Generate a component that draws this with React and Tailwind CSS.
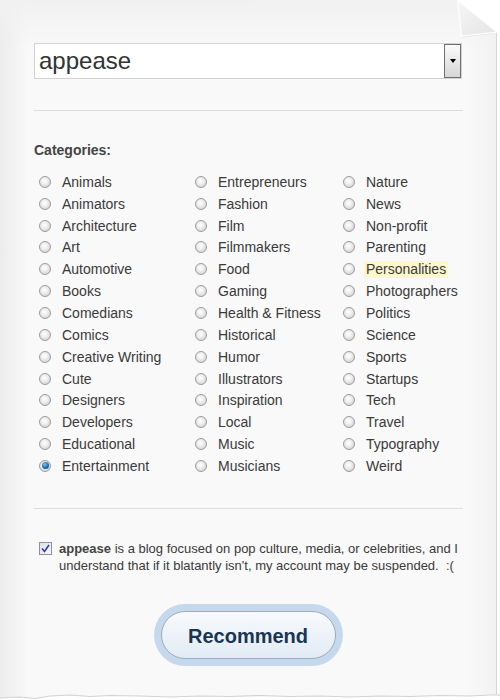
import React from "react";

const col1 = ["Animals","Animators","Architecture","Art","Automotive","Books","Comedians","Comics","Creative Writing","Cute","Designers","Developers","Educational","Entertainment"];
const col2 = ["Entrepreneurs","Fashion","Film","Filmmakers","Food","Gaming","Health & Fitness","Historical","Humor","Illustrators","Inspiration","Local","Music","Musicians"];
const col3 = ["Nature","News","Non-profit","Parenting","Personalities","Photographers","Politics","Science","Sports","Startups","Tech","Travel","Typography","Weird"];

function Radio({ checked }) {
  return (
    <span className="ml-[5px] mr-[11px] w-[12px] h-[12px] rounded-full border border-[#9c9c9c] bg-[radial-gradient(circle_at_45%_40%,#ffffff_0%,#f0f0f0_35%,#c9c9c9_100%)] flex items-center justify-center shrink-0">
      {checked && (
        <span className="w-[7px] h-[7px] rounded-full bg-[radial-gradient(circle_at_40%_35%,#7fc3f0_0%,#1a6db3_55%,#0b3f73_100%)]" />
      )}
    </span>
  );
}

function Cell({ label }) {
  const checked = label === "Entertainment";
  const hl = label === "Personalities";
  return (
    <div className="flex items-center h-[21.85px]">
      <Radio checked={checked} />
      <span className={hl ? "bg-[#fdf7cf] px-[2px] -ml-[2px] leading-[17px]" : ""}>{label}</span>
    </div>
  );
}

export default function App() {
  const rows = [];
  for (let i = 0; i < 14; i++) {
    rows.push(<Cell key={"a" + i} label={col1[i]} />);
    rows.push(<Cell key={"b" + i} label={col2[i]} />);
    rows.push(<Cell key={"c" + i} label={col3[i]} />);
  }
  return (
    <div className="relative w-[500px] h-[700px] overflow-hidden bg-white font-['Liberation_Sans',Arial,sans-serif] text-[#3a3a3a]">
      <div className="relative w-[497px] h-[700px] bg-[#f9f9f9] border-r border-[#d6d6d6]">
        <div className="absolute left-0 top-0 w-[28px] h-full bg-gradient-to-r from-[#ececec] to-transparent" />
        <div className="absolute left-0 top-0 w-full h-[50px] bg-gradient-to-b from-[#f1f1f1] to-transparent" />
        <div className="absolute right-0 top-0 w-[30px] h-full bg-gradient-to-l from-[#f2f2f2] to-transparent" />

        <div className="relative pt-[43px] px-[34px]">
          <div className="h-[36px] w-[428px] border border-[#d2d2d2] bg-white flex items-center justify-between">
            <span className="pl-[4px] text-[24px] leading-[28px] text-[#333]">appease</span>
            <div className="w-[17px] h-[34px] border border-[#6f6f6f] bg-gradient-to-b from-[#fbfbfb] to-[#d6d6d6] flex items-start justify-center pt-[14px]">
              <span className="w-0 h-0 border-l-[3px] border-r-[3px] border-t-[4px] border-l-transparent border-r-transparent border-t-black" />
            </div>
          </div>

          <div className="mt-[31px] h-px w-[429px] bg-[#dcdcdc]" />

          <div className="mt-[31px] text-[14px] leading-[16px] font-bold text-[#444]">Categories:</div>

          <div className="mt-[13px] grid grid-cols-[156px_148px_1fr] text-[14px] leading-[16px]">
            {rows}
          </div>

          <div className="mt-[31px] h-px w-[429px] bg-[#dcdcdc]" />

          <div className="mt-[31px] flex items-start">
            <span className="mt-[2px] ml-[5px] mr-[7px] w-[13px] h-[13px] border border-[#8e8f9c] bg-gradient-to-br from-[#dfe0ea] to-[#f7f7fb] flex items-center justify-center shrink-0">
              <svg width="9" height="9" viewBox="0 0 9 9">
                <path d="M1 4.5 L3.5 7.5 L8 1" fill="none" stroke="#2a3fae" strokeWidth="1.6" />
              </svg>
            </span>
            <p className="text-[13px] leading-[17px] text-[#3a3a3a]">
              <b className="text-[#444]">appease</b> is a blog focused on pop culture, media, or celebrities, and I understand that if it blatantly isn't, my account may be suspended.&nbsp; :(
            </p>
          </div>

          <div className="mt-[30px] flex justify-center">
            <div className="rounded-full bg-[#c6d8ec] p-[7px]">
              <button className="w-[175px] h-[48px] pt-[3px] rounded-full border border-[#9eacbd] bg-gradient-to-b from-[#f8fafd] to-[#e2ebf5] text-[20px] font-bold text-[#1a3553]">
                Recommend
              </button>
            </div>
          </div>
        </div>
      </div>

      <svg className="absolute left-[456px] top-0" width="44" height="44" viewBox="0 0 44 44">
        <defs>
          <linearGradient id="flap" x1="0" y1="0" x2="1" y2="1">
            <stop offset="0" stopColor="#f6f6f6" />
            <stop offset="1" stopColor="#e4e4e4" />
          </linearGradient>
        </defs>
        <polygon points="1,0 44,0 44,36" fill="#ffffff" />
        <polygon points="1,0 6,37.5 42,33" fill="#d8d8d8" opacity="0.6" />
        <polygon points="1.5,0 5.5,36 41,32" fill="url(#flap)" stroke="#ffffff" strokeWidth="1.2" />
      </svg>

      <svg className="absolute left-0 bottom-0" width="500" height="10" viewBox="0 0 500 10">
        <path d="M0 8 L20 7 L35 8.5 L50 6 L70 5 L90 6.5 L110 5.5 L140 6 L170 7 L200 6 L230 6.5 L260 5.5 L290 6.5 L320 6 L350 7 L380 6 L410 6.5 L440 5.5 L470 6 L490 5 L500 5 L500 10 L0 10 Z" fill="#ffffff" />
        <path d="M0 8 L20 7 L35 8.5 L50 6 L70 5 L90 6.5 L110 5.5 L140 6 L170 7 L200 6 L230 6.5 L260 5.5 L290 6.5 L320 6 L350 7 L380 6 L410 6.5 L440 5.5 L470 6 L490 5 L500 5" fill="none" stroke="#d2d2d2" strokeWidth="1.2" />
      </svg>
    </div>
  );
}
